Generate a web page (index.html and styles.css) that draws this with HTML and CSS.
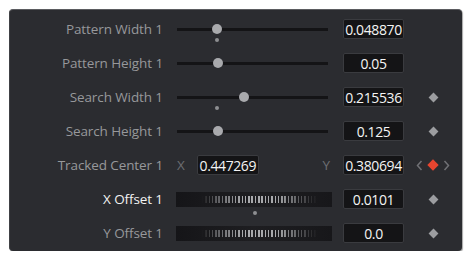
FILE: index.html
```html
<!DOCTYPE html>
<html lang="en">

<head>
    <meta charset="UTF-8">
    <title>Tracker Inspector</title>
    <link rel="stylesheet" href="styles.css">
</head>

<body>
    <div class="panel">
        <div class="row">
            <div class="label">Pattern Width 1</div>
            <div class="slider" style="--pos: 40px; --def: 40px"><span class="thumb"></span><span class="mark"></span></div>
            <div class="value">0.048870</div>
            <div class="key"></div>
        </div>
        <div class="row">
            <div class="label">Pattern Height 1</div>
            <div class="slider" style="--pos: 41px"><span class="thumb"></span></div>
            <div class="value">0.05</div>
            <div class="key"></div>
        </div>
        <div class="row">
            <div class="label">Search Width 1</div>
            <div class="slider" style="--pos: 67px; --def: 40px"><span class="thumb"></span><span class="mark"></span></div>
            <div class="value">0.215536</div>
            <div class="key"><span class="diamond"></span></div>
        </div>
        <div class="row">
            <div class="label">Search Height 1</div>
            <div class="slider" style="--pos: 41px"><span class="thumb"></span></div>
            <div class="value">0.125</div>
            <div class="key"><span class="diamond"></span></div>
        </div>
        <div class="row">
            <div class="label">Tracked Center 1</div>
            <div class="point">
                <span class="axis">X</span>
                <span class="value">0.447269</span>
                <span class="axis axis-y">Y</span>
            </div>
            <div class="value">0.380694</div>
            <div class="key">
                <svg class="chev" width="7" height="11" viewBox="0 0 7 11"><path d="M5.5 1 L1.5 5.5 L5.5 10" fill="none" stroke="#707175" stroke-width="1.5"/></svg>
                <span class="diamond active"></span>
                <svg class="chev" width="7" height="11" viewBox="0 0 7 11"><path d="M1.5 1 L5.5 5.5 L1.5 10" fill="none" stroke="#707175" stroke-width="1.5"/></svg>
            </div>
        </div>
        <div class="row">
            <div class="label bright">X Offset 1</div>
            <div class="wheel"><span class="mark"></span></div>
            <div class="value">0.0101</div>
            <div class="key"><span class="diamond"></span></div>
        </div>
        <div class="row">
            <div class="label">Y Offset 1</div>
            <div class="wheel"></div>
            <div class="value">0.0</div>
            <div class="key"><span class="diamond"></span></div>
        </div>
    </div>
</body>

</html>
```

FILE: styles.css
```css
body {
    margin: 0;
    background: #ffffff;
    font-family: "Open Sans", "Noto Sans", sans-serif;
    font-size: 13.5px;
}

.panel {
    width: 453px;
    height: 242px;
    margin: 9px 0 0 9px;
    padding-top: 2px;
    box-sizing: border-box;
    background: #2b2c30;
    border-radius: 4px;
    border-top: 1px solid #5b5c60;
    border-left: 1px solid #404145;
    box-shadow: 1px 1px 1px rgba(0, 0, 0, 0.35);
}

.row {
    height: 34px;
    display: grid;
    grid-template-columns: 167px 166px 61px 58px;
    align-items: center;
}

.label {
    text-align: right;
    padding-right: 14px;
    color: #97989b;
    letter-spacing: -0.1px;
    white-space: nowrap;
}

.label.bright {
    color: #f2f2f2;
    font-weight: 500;
}

.slider {
    width: 151px;
    height: 3px;
    background: #141416;
    position: relative;
}

.thumb {
    position: absolute;
    left: var(--pos);
    top: 50%;
    width: 10px;
    height: 10px;
    border-radius: 50%;
    background: #a9aaad;
    transform: translate(-50%, -50%);
}

.slider .mark {
    position: absolute;
    left: var(--def);
    top: 10px;
    width: 4px;
    height: 4px;
    border-radius: 50%;
    background: #8d8e91;
    transform: translateX(-50%);
}

.value {
    height: 20px;
    line-height: 19px;
    box-sizing: border-box;
    background: #141416;
    border: 1px solid #3a3b3f;
    border-radius: 2px;
    color: #f4f4f4;
    font-size: 14px;
    font-weight: 500;
    text-align: center;
    letter-spacing: -0.4px;
    overflow: hidden;
    white-space: nowrap;
}

.key {
    display: flex;
    align-items: center;
    justify-content: center;
    gap: 5px;
}

.diamond {
    width: 7px;
    height: 7px;
    background: #9c9da0;
    transform: rotate(45deg);
}

.diamond.active {
    width: 8px;
    height: 8px;
    background: #e8452f;
    margin: 0 1px;
}

.point {
    width: 155px;
    display: flex;
    align-items: center;
}

.point .value {
    width: 62px;
    margin-left: 12px;
}

.axis {
    color: #6d6e72;
}

.axis-y {
    margin-left: auto;
    padding-right: 2px;
}

.wheel {
    width: 156px;
    height: 15px;
    margin-left: -1px;
    background: linear-gradient(90deg, #151518 0%, #1e1e21 50%, #17171a 100%);
    position: relative;
}

.wheel::before {
    content: '';
    position: absolute;
    left: 26px;
    right: 15px;
    top: 4px;
    bottom: 4px;
    background: repeating-linear-gradient(90deg, #a9aaad 0 1.5px, transparent 1.5px 3.3px);
    -webkit-mask-image: linear-gradient(90deg, transparent 0%, rgba(0, 0, 0, 0.4) 10%, #000 35%, #000 65%, rgba(0, 0, 0, 0.3) 90%, transparent 100%);
    mask-image: linear-gradient(90deg, transparent 0%, rgba(0, 0, 0, 0.4) 10%, #000 35%, #000 65%, rgba(0, 0, 0, 0.3) 90%, transparent 100%);
}

.wheel .mark {
    position: absolute;
    left: 77px;
    top: 19px;
    width: 4px;
    height: 4px;
    border-radius: 50%;
    background: #8d8e91;
}
```
